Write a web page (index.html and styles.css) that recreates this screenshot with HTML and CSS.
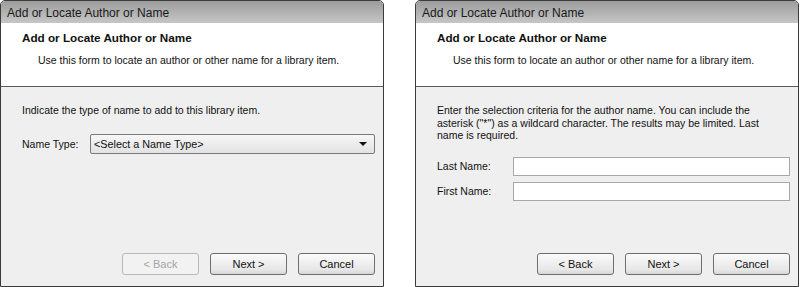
FILE: index.html
```html
<!DOCTYPE html>
<html lang="en">
<head>
    <meta charset="UTF-8">
    <title>Add or Locate Author or Name</title>
    <link rel="stylesheet" href="styles.css">
</head>
<body>
    <div class="window">
        <div class="titlebar">Add or Locate Author or Name</div>
        <div class="header">
            <h1>Add or Locate Author or Name</h1>
            <p>Use this form to locate an author or other name for a library item.</p>
        </div>
        <div class="content">
            <p class="intro">Indicate the type of name to add to this library item.</p>
            <div class="field-row type-row">
                <label>Name Type:</label>
                <div class="combo">
                    <span>&lt;Select a Name Type&gt;</span>
                    <span class="arrow"></span>
                </div>
            </div>
            <div class="buttons">
                <button class="btn" disabled>&lt; Back</button>
                <button class="btn">Next &gt;</button>
                <button class="btn">Cancel</button>
            </div>
        </div>
    </div>

    <div class="window">
        <div class="titlebar">Add or Locate Author or Name</div>
        <div class="header">
            <h1>Add or Locate Author or Name</h1>
            <p>Use this form to locate an author or other name for a library item.</p>
        </div>
        <div class="content">
            <p class="intro wrap">Enter the selection criteria for the author name. You can include the asterisk ("*") as a wildcard character. The results may be limited. Last name is required.</p>
            <div class="field-row name-row first">
                <label>Last Name:</label>
                <input type="text">
            </div>
            <div class="field-row name-row">
                <label>First Name:</label>
                <input type="text">
            </div>
            <div class="buttons">
                <button class="btn">&lt; Back</button>
                <button class="btn">Next &gt;</button>
                <button class="btn">Cancel</button>
            </div>
        </div>
    </div>
</body>
</html>
```

FILE: styles.css
```css
* {
    margin: 0;
    padding: 0;
    box-sizing: border-box;
}

body {
    font-family: 'Liberation Sans', Arial, sans-serif;
    font-size: 10.5px;
    color: #111;
    background: white;
    display: flex;
    gap: 31px;
    height: 287px;
    overflow: hidden;
}

.window {
    width: 384px;
    height: 287px;
    border: 1px solid #3a3a3a;
    border-radius: 5px 5px 0 0;
    display: flex;
    flex-direction: column;
    overflow: hidden;
}

.titlebar {
    height: 22px;
    background: linear-gradient(#9c9c9c 0%, #b5b5b5 60%, #c6c6c6 100%);
    font-size: 12px;
    padding: 5px 0 0 6px;
    color: #1a1a1a;
}

.header {
    height: 64px;
    background: white;
    border-bottom: 1px solid #5a5a5a;
    padding: 8px 0 0 21px;
}

.header h1 {
    font-size: 11.7px;
    font-weight: bold;
    margin-bottom: 10px;
}

.header p {
    padding-left: 16px;
    font-size: 10.5px;
}

.content {
    flex: 1;
    background: #efefef;
    padding: 17px 8px 11px 21px;
    display: flex;
    flex-direction: column;
}

.intro {
    line-height: 12.5px;
}

.intro.wrap {
    padding-right: 25px;
}

.field-row {
    display: flex;
    align-items: center;
}

.field-row label {
    width: 68px;
}

.type-row {
    margin-top: 17px;
}

.combo {
    width: 285px;
    height: 20px;
    border: 1px solid #7a7a7a;
    border-radius: 2px;
    background: linear-gradient(#f7f7f7, #e2e2e2);
    display: flex;
    align-items: center;
    justify-content: space-between;
    padding: 0 7px 0 3px;
    font-size: 10.8px;
}

.arrow {
    width: 0;
    height: 0;
    border-left: 4px solid transparent;
    border-right: 4px solid transparent;
    border-top: 4px solid #111;
}

.name-row label {
    width: 76px;
}

.name-row.first {
    margin-top: 15px;
}

.name-row + .name-row {
    margin-top: 6px;
}

.name-row input {
    width: 277px;
    height: 19px;
    border: 1px solid #a8a8a8;
    background: white;
}

.buttons {
    margin-top: auto;
    display: flex;
    justify-content: flex-end;
    gap: 11px;
}

.btn {
    width: 77px;
    height: 22px;
    font-family: 'Liberation Sans', Arial, sans-serif;
    font-size: 11px;
    color: #111;
    border: 1px solid #6e6e6e;
    border-radius: 3px;
    background: linear-gradient(#fbfbfb, #e6e6e6 80%, #d6d6d6);
}

.btn:disabled {
    color: #a5a5a5;
    border-color: #b8b8b8;
    background: #f2f2f2;
}
```
